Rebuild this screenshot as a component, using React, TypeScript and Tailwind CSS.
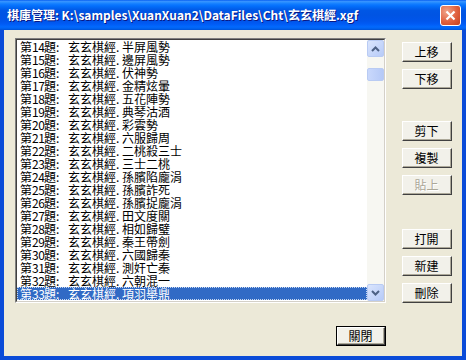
import React from "react";

const items: [string, string][] = [
  ["14", "半屏風勢"],
  ["15", "邊屏風勢"],
  ["16", "伏神勢"],
  ["17", "金精炫暈"],
  ["18", "五花陣勢"],
  ["19", "典琴沽酒"],
  ["20", "彩雲勢"],
  ["21", "六服歸周"],
  ["22", "二桃殺三士"],
  ["23", "三士二桃"],
  ["24", "孫臏陷龐涓"],
  ["25", "孫臏詐死"],
  ["26", "孫臏捉龐涓"],
  ["27", "田文度關"],
  ["28", "相如歸璧"],
  ["29", "秦王帶劍"],
  ["30", "六國歸秦"],
  ["31", "測奸亡秦"],
  ["32", "六朝混一"],
  ["33", "項羽舉鼎"],
];

const font = { fontFamily: '"Noto Sans CJK TC", "Liberation Sans", sans-serif' };

function Btn({ label, disabled, def, className }: { label: string; disabled?: boolean; def?: boolean; className?: string }) {
  return (
    <div className={`w-[50px] h-[20px] ${def ? "border border-black" : ""} ${className ?? ""}`}>
      <div className="w-full h-full border-t border-l border-t-white border-l-white border-b border-r border-b-[#404040] border-r-[#404040]">
        <div className="w-full h-full border-b border-r border-b-[#ACA899] border-r-[#ACA899] bg-[#F2F1EA] flex items-center justify-center">
          <span
            className={`text-[12px] leading-[12px] ${disabled ? "text-[#ACA899] [text-shadow:1px_1px_#ffffff]" : "text-black"}`}
          >
            {label}
          </span>
        </div>
      </div>
    </div>
  );
}

function ScrollBtn({ up }: { up?: boolean }) {
  return (
    <div className="w-[17px] h-[17px] rounded-[2px] border border-[#B9CBF3] bg-[linear-gradient(135deg,#DAE5FD,#B7CBF8)] flex items-center justify-center">
      <svg width="9" height="6" viewBox="0 0 9 6">
        {up ? (
          <path d="M1 5 L4.5 1.5 L8 5" stroke="#4D6185" strokeWidth="2" fill="none" />
        ) : (
          <path d="M1 1 L4.5 4.5 L8 1" stroke="#4D6185" strokeWidth="2" fill="none" />
        )}
      </svg>
    </div>
  );
}

export default function App() {
  return (
    <div className="w-[466px] h-[360px] flex flex-col overflow-hidden" style={font}>
      {/* title bar */}
      <div className="h-[30px] shrink-0 flex items-center pl-[7px] pr-[5px] bg-[linear-gradient(to_bottom,#0058EE_0%,#3A93FF_4%,#288EFF_8%,#127DFF_13%,#036FFC_20%,#0262EE_28%,#0057E5_35%,#0054E3_50%,#0055EB_70%,#005BF5_80%,#026AFE_90%,#0062EF_95%,#0052D6_100%)]">
        <span className="text-white font-bold text-[12px] leading-[16px] [text-shadow:1px_1px_#0A1883] whitespace-nowrap flex-1">
          {"棋庫管理: K:\\samples\\XuanXuan2\\DataFiles\\Cht\\玄玄棋經.xgf"}
        </span>
        <div className="w-[21px] h-[21px] rounded-[3px] border border-white bg-[radial-gradient(circle_at_30%_30%,#F0A48A,#E0603E_55%,#C4401E)] flex items-center justify-center">
          <svg width="11" height="11" viewBox="0 0 11 11">
            <path d="M1.5 1.5 L9.5 9.5 M9.5 1.5 L1.5 9.5" stroke="white" strokeWidth="2.2" />
          </svg>
        </div>
      </div>
      {/* frame */}
      <div className="flex-1 flex border-x-4 border-b-4 border-[#0A4BD8]">
        <div className="flex-1 bg-[#ECE9D8] pl-[11px] pt-[8px] flex flex-col">
          <div className="flex">
            {/* list */}
            <div className="w-[371px] h-[265px] border-t border-l border-t-[#808080] border-l-[#808080] border-b border-r border-b-white border-r-white">
              <div className="w-full h-full border-t border-l border-t-[#404040] border-l-[#404040] border-b border-r border-b-[#D4D0C8] border-r-[#D4D0C8] bg-white flex">
                <div className="flex-1 flex flex-col overflow-hidden">
                  {items.map(([n, t], i) => {
                    const sel = i === items.length - 1;
                    return (
                      <div
                        key={n}
                        className={`h-[13px] shrink-0 pl-[3px] text-[12px] leading-[13px] whitespace-nowrap flex items-center ${
                          sel ? "bg-[#316AC5] text-white outline-1 outline-dotted outline-[#C8D8F0] -outline-offset-1" : "text-black"
                        }`}
                      >
                        <span>第</span>
                        <span className="inline-block w-[12px] text-center tracking-[-0.5px]">{n}</span>
                        <span>題</span>
                        <span className="inline-block w-[12px]">:</span>
                        <span>玄玄棋經</span>
                        <span className="inline-block w-[6px]">.</span>
                        <span>{t}</span>
                      </div>
                    );
                  })}
                </div>
                {/* scrollbar */}
                <div className="w-[17px] bg-[#F7F7F2] flex flex-col">
                  <ScrollBtn up />
                  <div className="h-[11px]" />
                  <div className="w-[17px] h-[13px] rounded-[2px] border border-[#B9CBF3] bg-[linear-gradient(90deg,#C9D8FC,#B5C9F7)]" />
                  <div className="flex-1" />
                  <ScrollBtn />
                </div>
              </div>
            </div>
            {/* buttons */}
            <div className="ml-[16px] flex flex-col pt-[4px]">
              <Btn label="上移" />
              <Btn label="下移" className="mt-[7px]" />
              <Btn label="剪下" className="mt-[32px]" />
              <Btn label="複製" className="mt-[7px]" />
              <Btn label="貼上" disabled className="mt-[7px]" />
              <Btn label="打開" className="mt-[34px]" />
              <Btn label="新建" className="mt-[7px]" />
              <Btn label="刪除" className="mt-[7px]" />
            </div>
          </div>
          <div className="w-[371px] flex justify-end mt-[23px]">
            <Btn label="關閉" def />
          </div>
        </div>
      </div>
    </div>
  );
}
